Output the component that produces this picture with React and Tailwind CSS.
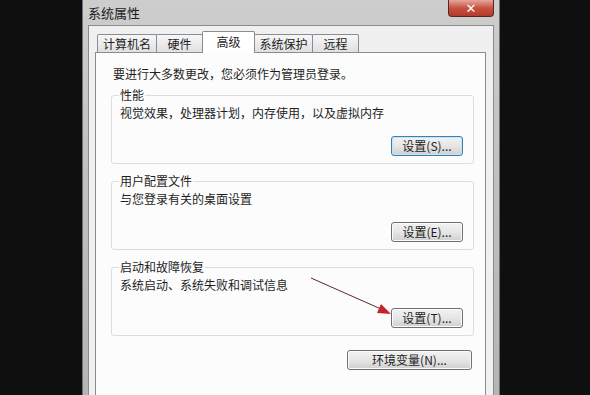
import React from "react"

const font = { fontFamily: '"Noto Sans CJK SC", "Noto Sans", sans-serif' }

function Tab({ label, width, active }) {
    if (active) {
        return (
            <div className={`${width} -ml-px h-[22px] relative z-10 bg-white border border-b-0 border-[#898c95] rounded-t-[2px] flex justify-center pt-[2px] text-[12px] leading-[16px] text-[#1e1e1e]`}>
                {label}
            </div>
        )
    }
    return (
        <div className={`${width} -ml-px first:ml-0 h-[18px] mb-px border border-b-0 border-[#898c95] rounded-t-[2px] bg-gradient-to-b from-[#f7f7f7] to-[#e0e0e0] flex justify-center pt-[2px] text-[12px] leading-[14px] text-[#1e1e1e]`}>
            {label}
        </div>
    )
}

function WinButton({ label, width, primary }) {
    return (
        <div className={`${width} h-[20px] rounded-[3px] border ${primary ? 'border-[#3c7fb1] shadow-[inset_0_0_0_1px_#c4e5f6]' : 'border-[#707070] shadow-[inset_0_0_0_1px_#fbfbfb]'} bg-gradient-to-b from-[#f2f2f2] via-[#e6e6e6] to-[#cfcfcf] flex items-center justify-center text-[12px] leading-[14px] text-[#1e1e1e]`}>
            {label}
        </div>
    )
}

function GroupBox({ title, text, button, primary, className }) {
    return (
        <fieldset className={`w-[363px] h-[76px] border border-[#d5dfe5] rounded-[3px] px-[8px] ${className}`}>
            <legend className="px-[1px] -ml-[1px] text-[12px] leading-[14px] text-[#1e1e1e]">{title}</legend>
            <div className="mt-[3px] text-[12px] leading-[16px] text-[#1e1e1e]">{text}</div>
            <div className="flex justify-end pr-[2px] mt-[15px]">
                <WinButton label={button} width="w-[72px]" primary={primary} />
            </div>
        </fieldset>
    )
}

export default function App() {
    return (
        <div className="relative w-[590px] h-[395px] bg-[#0f0f0f] overflow-hidden" style={font}>
            <div className="ml-[82px] w-[418px] h-[395px] flex flex-col border-x border-[#6f6f6f] bg-gradient-to-b from-[#cdcdcd] via-[#bfbfbf] to-[#b5b5b5]">
                {/* title bar */}
                <div className="h-[25px] flex items-start justify-between pl-[5px] pr-[5px]">
                    <span className="mt-[5px] text-[13px] leading-[15px] text-[#1a1a1a]">系统属性</span>
                    <div className="w-[46px] h-[17px] rounded-b-[4px] border border-t-0 border-[#5e2520] bg-gradient-to-b from-[#e3a79b] via-[#c7513f] to-[#b33a2b] flex items-center justify-center">
                        <span className="text-white text-[13px] leading-[13px] font-bold" style={{ fontFamily: '"DejaVu Sans", sans-serif' }}>✕</span>
                    </div>
                </div>

                {/* body */}
                <div className="flex-1 px-[5px] min-h-0">
                    <div className="h-full border border-b-0 border-[#8a8a8a] bg-[#f0f0f0] pl-[6px] pr-[7px] pt-[5px] flex flex-col">
                        <div className="flex items-end h-[22px] -mb-px pl-[2px] relative z-10">
                            <Tab label="计算机名" width="w-[60px]" />
                            <Tab label="硬件" width="w-[47px]" />
                            <Tab label="高级" width="w-[53px]" active />
                            <Tab label="系统保护" width="w-[59px]" />
                            <Tab label="远程" width="w-[47px]" />
                        </div>
                        <div className="flex-1 border border-b-0 border-[#898c95] bg-[#fcfcfc] pl-[15px] pr-[10px] pt-[13px]">
                            <div className="pl-[2px] text-[12px] leading-[16px] text-[#1e1e1e]">要进行大多数更改，您必须作为管理员登录。</div>
                            <GroupBox className="mt-[6px]" title="性能" text="视觉效果，处理器计划，内存使用，以及虚拟内存" button="设置(S)..." primary />
                            <GroupBox className="mt-[10px]" title="用户配置文件" text="与您登录有关的桌面设置" button="设置(E)..." />
                            <GroupBox className="mt-[10px]" title="启动和故障恢复" text="系统启动、系统失败和调试信息" button="设置(T)..." />
                            <div className="flex justify-end w-[363px] mt-[14px] pr-[2px]">
                                <WinButton label="环境变量(N)..." width="w-[125px]" />
                            </div>
                        </div>
                    </div>
                </div>
            </div>

            {/* red annotation arrow */}
            <svg className="absolute left-0 top-0 pointer-events-none" width="590" height="395">
                <line x1="311" y1="278" x2="381" y2="309" stroke="#5a2a2a" strokeWidth="1" />
                <polygon points="391,314 377,313 381,304" fill="#c3262a" />
            </svg>
        </div>
    )
}
